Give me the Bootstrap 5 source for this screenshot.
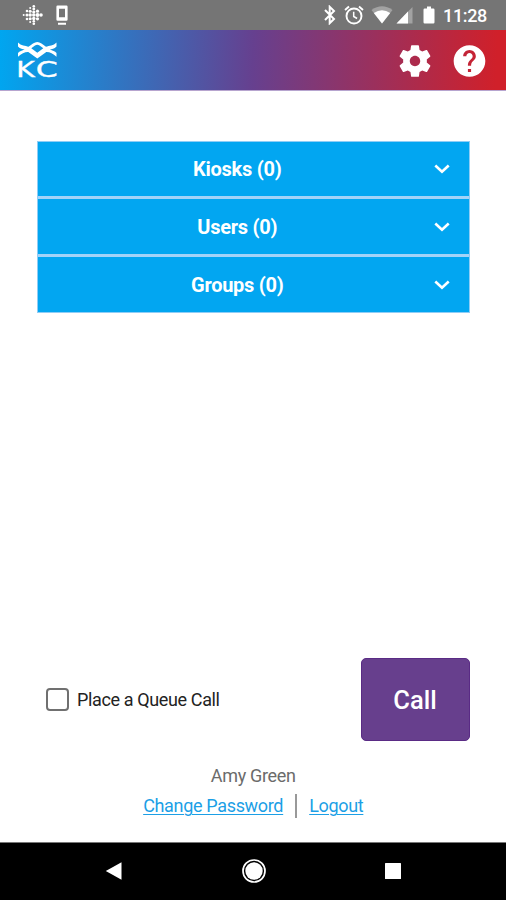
<!DOCTYPE html>
<html lang="en">
<head>
<meta charset="utf-8">
<meta name="viewport" content="width=device-width, initial-scale=1">
<title>KC</title>
<link href="https://cdn.jsdelivr.net/npm/bootstrap@5.3.0/dist/css/bootstrap.min.css" rel="stylesheet">
<style>
  body { font-family: Roboto, "Liberation Sans", sans-serif; height: 900px; overflow: hidden; }
  svg { display: block; flex: none; }
  .status-bar { height: 30px; background: #757575; padding: 0 18px 0 22px; font-size: 18px; font-weight: 500; }
  .status-bar .clock { width: 44px; margin-left: 8px; margin-right: 1px; line-height: 30px; padding-top: 1px; letter-spacing: -.35px; }
  .app-bar { height: 61px; padding: 0 19px 0 16px; background: linear-gradient(92deg, #00a6f0 0%, #66408f 50%, #d0202a 98%); border-bottom: 1px solid #b7a5cf; }
  .app-bar .icon-btn { line-height: 0; padding-top: 1px; }
  .app-main { padding: 49.500px 36.500px 0 37px; }
  .groups { --bs-list-group-border-radius: 0; gap: 3px; background: #a3d3f8; border: 1px solid #8fcdf6; }
  .groups .group-row { height: 54.700px; background: #02a6f1; font-size: 20px; font-weight: 700; letter-spacing: -.27px; padding: 1px 16px 0 0; }
  .groups .group-row .label { padding-left: 6px; }
  .queue-row { height: 83px; padding-left: 9px; }
  .queue-check { width: 23px; height: 23px; margin: 0 8px 0 0 !important; border: 2px solid #707070; border-radius: 3px; }
  .queue-label { font-size: 18px; color: #222; line-height: 24px; letter-spacing: -.37px; padding-top: 1px; }
  .call-btn { width: 109px; height: 83px; border-radius: 5px; font-size: 25.500px; font-weight: 500; padding-top: 8px; --bs-btn-color: #fff; --bs-btn-bg: #673f8d; --bs-btn-border-color: #5a2b85; --bs-btn-hover-bg: #5b367e; --bs-btn-hover-color: #fff; }
  .account { padding: 23px 0 24px; font-size: 18px; line-height: 24px; color: #6b6b6b; letter-spacing: -.33px; }
  .account a { color: #1c9fe6; text-decoration-thickness: 1px; text-underline-offset: 2px; }
  .account .rule { width: 2px; height: 24px; background: #999; margin: 0 12px; }
  .nav-keys { height: 58px; background: #000; border-top: 1px solid #777; padding: 0 104px 2px 105px; }
</style>
</head>
<body class="d-flex flex-column bg-white">
  <div class="status-bar d-flex align-items-center text-white">
    <svg width="21" height="22" viewBox="0 0 21 22" fill="#fff">
      <circle cx="1.700" cy="11" r="1"/><circle cx="5" cy="11" r="1.500"/><circle cx="5" cy="7" r="1.300"/><circle cx="5" cy="15" r="1.300"/>
      <circle cx="8.200" cy="4" r="1"/><circle cx="8.200" cy="7.300" r="1.500"/><circle cx="8.200" cy="11" r="1.700"/><circle cx="8.200" cy="14.700" r="1.500"/><circle cx="8.200" cy="18" r="1"/>
      <circle cx="11.800" cy="2.300" r="1.300"/><circle cx="11.800" cy="5" r="1.400"/><circle cx="11.800" cy="8" r="1.600"/><circle cx="11.800" cy="11" r="1.800"/><circle cx="11.800" cy="14.500" r="1.700"/><circle cx="11.800" cy="17.200" r="1.300"/><circle cx="11.800" cy="19.700" r="1.300"/>
      <circle cx="15.500" cy="7.200" r="1.600"/><circle cx="15.500" cy="11" r="1.900"/><circle cx="15.500" cy="14.800" r="1.600"/><circle cx="19" cy="11" r="1.800"/>
    </svg>
    <svg class="me-auto" style="margin-left:13px" width="12" height="22" viewBox="0 0 12 22" fill="#fff">
      <path fill-rule="evenodd" d="M1.600 1.500h8.800q1.200 0 1.200 1.200v12.800q0 1.200-1.200 1.200H1.600Q.4 16.700.4 15.500V2.700Q.4 1.500 1.600 1.500zM3 4.800v8.500h6v-8.500zM2 18.800h8v2H2z"/>
    </svg>
    <svg width="12" height="20" viewBox="0 0 12 20" fill="none" stroke="#fff" stroke-width="2">
      <path d="M1 5l9 9-4.300 4.200V1.800L10 6l-9 9"/>
    </svg>
    <svg class="ms-2" width="20" height="20" viewBox="0 0 20 20" fill="none" stroke="#fff" stroke-width="1.900">
      <circle cx="10" cy="11" r="7.500"/><path d="M1 5l4-3.500M19 5l-4-3.500"/><path d="M9.700 6.800v4.700l3.400 2" stroke-width="1.500"/>
    </svg>
    <svg style="margin-left:7px" width="22" height="18" viewBox="0 0 22 18">
      <path d="M11 17.500L.5 4Q11-3.500 21.500 4z" fill="#a2a2a2"/><path d="M11 17.500L2.800 7Q11 1.500 19.200 7z" fill="#fff"/>
    </svg>
    <svg style="margin-left:3px" width="17" height="18" viewBox="0 0 17 18">
      <path d="M.5 17.500L16.500 1v16.500z" fill="#a2a2a2"/><path d="M.5 17.500L12 5.600v11.900z" fill="#fff"/>
    </svg>
    <svg style="margin-left:10px" width="12" height="18" viewBox="0 0 12 18" fill="#fff">
      <path d="M4 .5h4v2h2.300q1.200 0 1.200 1.200v12.600q0 1.200-1.200 1.200H1.700q-1.200 0-1.200-1.200V3.700q0-1.200 1.200-1.200H4z"/>
    </svg>
    <span class="clock text-nowrap">11:28</span>
  </div>

  <header class="app-bar d-flex align-items-center justify-content-between">
    <svg width="43" height="40" viewBox="16 40 43 40" role="img" aria-label="KC">
      <path fill="#fff" fill-rule="evenodd" d="M18 42.500C21 45.800 25.500 45.500 28.500 46.800L33 43.500Q37.300 40.500 41.500 43.500L46 46.800C49 45.500 53.500 45.800 56.500 42.500V46.500C54.500 49 51.500 49.300 49.800 49.600C52.500 50.500 55 51.500 56.500 53V56.800C53 53.500 49.500 51.800 46.300 52L37.300 58.500L28.300 52C25 51.800 21.500 53.500 18 56.800V53C19.500 51.500 22 50.500 24.700 49.600C23 49.300 20 49 18 46.500zM31.300 48.300L37.300 52.700L43.300 48.300L39.500 45.500Q37.300 44 35 45.500z"/>
      <g fill="#fff" stroke="#fff" stroke-width=".35" font-family="DejaVu Sans, sans-serif" font-size="20.500">
        <text y="76.500"><tspan x="16.200" textLength="18.500" lengthAdjust="spacingAndGlyphs">K</tspan></text>
        <text y="76.500"><tspan x="35.800" textLength="22" lengthAdjust="spacingAndGlyphs">C</tspan></text>
      </g>
    </svg>
    <div class="d-flex align-items-center">
      <a href="#" class="icon-btn" aria-label="Settings">
        <svg width="38" height="38" viewBox="0 0 24 24" fill="#fff"><path d="M19.430 12.980c.040-.320.070-.640.070-.980s-.030-.660-.070-.980l2.110-1.650c.190-.150.240-.420.120-.640l-2-3.460c-.120-.220-.390-.300-.610-.220l-2.490 1c-.520-.400-1.080-.730-1.690-.980l-.380-2.650C14.460 2.180 14.250 2 14 2h-4c-.250 0-.460.180-.490.420l-.380 2.650c-.610.250-1.170.590-1.690.980l-2.490-1c-.230-.090-.490 0-.610.220l-2 3.460c-.130.220-.070.490.120.640l2.110 1.650c-.040.320-.070.650-.070.980s.030.660.070.980l-2.110 1.650c-.190.150-.240.420-.120.640l2 3.460c.120.220.390.300.610.220l2.490-1c.520.400 1.080.730 1.690.980l.380 2.650c.030.240.240.420.490.420h4c.250 0 .460-.180.490-.420l.380-2.650c.610-.250 1.170-.590 1.690-.980l2.490 1c.230.090.490 0 .610-.220l2-3.460c.120-.220.070-.490-.120-.640l-2.110-1.650zM12 15.300c-1.820 0-3.300-1.480-3.300-3.300s1.480-3.300 3.300-3.300 3.300 1.480 3.300 3.300-1.480 3.300-3.300 3.300z"/></svg>
      </a>
      <a href="#" class="icon-btn" style="margin-left:18px" aria-label="Help">
        <svg width="35" height="38" viewBox="1 0 22 24" fill="#fff"><path d="M12 2C6.480 2 2 6.480 2 12s4.480 10 10 10 10-4.480 10-10S17.520 2 12 2zm1 17h-2v-2h2v2zm2.070-7.750l-.900.920C13.450 12.900 13 13.500 13 15h-2v-.500c0-1.100.450-2.100 1.170-2.830l1.240-1.260c.370-.360.590-.860.590-1.410 0-1.100-.900-2-2-2s-2 .900-2 2H8c0-2.210 1.790-4 4-4s4 1.790 4 4c0 .880-.360 1.680-.930 2.250z"/></svg>
      </a>
    </div>
  </header>

  <main class="app-main flex-grow-1 d-flex flex-column">
    <div class="groups list-group list-group-flush">
      <button type="button" class="group-row btn rounded-0 border-0 text-white d-flex align-items-center">
        <span class="label flex-grow-1 text-center">Kiosks (0)</span>
        <svg width="22" height="20" viewBox="0 0 22 20" fill="none" stroke="#fff" stroke-width="2.600"><path d="M4.300 6.500l6.700 6.300L17.700 6.500"/></svg>
      </button>
      <button type="button" class="group-row btn rounded-0 border-0 text-white d-flex align-items-center">
        <span class="label flex-grow-1 text-center">Users (0)</span>
        <svg width="22" height="20" viewBox="0 0 22 20" fill="none" stroke="#fff" stroke-width="2.600"><path d="M4.300 6.500l6.700 6.300L17.700 6.500"/></svg>
      </button>
      <button type="button" class="group-row btn rounded-0 border-0 text-white d-flex align-items-center">
        <span class="label flex-grow-1 text-center">Groups (0)</span>
        <svg width="22" height="20" viewBox="0 0 22 20" fill="none" stroke="#fff" stroke-width="2.600"><path d="M4.300 6.500l6.700 6.300L17.700 6.500"/></svg>
      </button>
    </div>

    <div class="queue-row mt-auto d-flex align-items-center justify-content-between">
      <div class="form-check d-flex align-items-center p-0 m-0">
        <input class="form-check-input queue-check" type="checkbox" id="queue">
        <label class="form-check-label queue-label" for="queue">Place a Queue Call</label>
      </div>
      <button type="button" class="btn call-btn">Call</button>
    </div>

    <footer class="account text-center">
      <div>Amy Green</div>
      <div class="d-flex justify-content-center align-items-center" style="margin-top:6px">
        <a href="#">Change Password</a><span class="rule"></span><a href="#">Logout</a>
      </div>
    </footer>
  </main>

  <nav class="nav-keys d-flex align-items-center justify-content-between">
    <svg width="18" height="20" viewBox="0 0 18 20"><path d="M.8 10L16.500 1.200v17.600z" fill="#fff"/></svg>
    <svg width="26" height="26" viewBox="0 0 26 26"><circle cx="13" cy="13" r="11" fill="none" stroke="#fff" stroke-width="1.700"/><circle cx="13" cy="13" r="8.700" fill="#fff"/></svg>
    <svg width="18" height="18" viewBox="0 0 18 18"><rect x="1" y="1" width="16" height="16" rx=".5" fill="#fff"/></svg>
  </nav>
<script src="https://cdn.jsdelivr.net/npm/bootstrap@5.3.0/dist/js/bootstrap.bundle.min.js"></script>
</body>
</html>
